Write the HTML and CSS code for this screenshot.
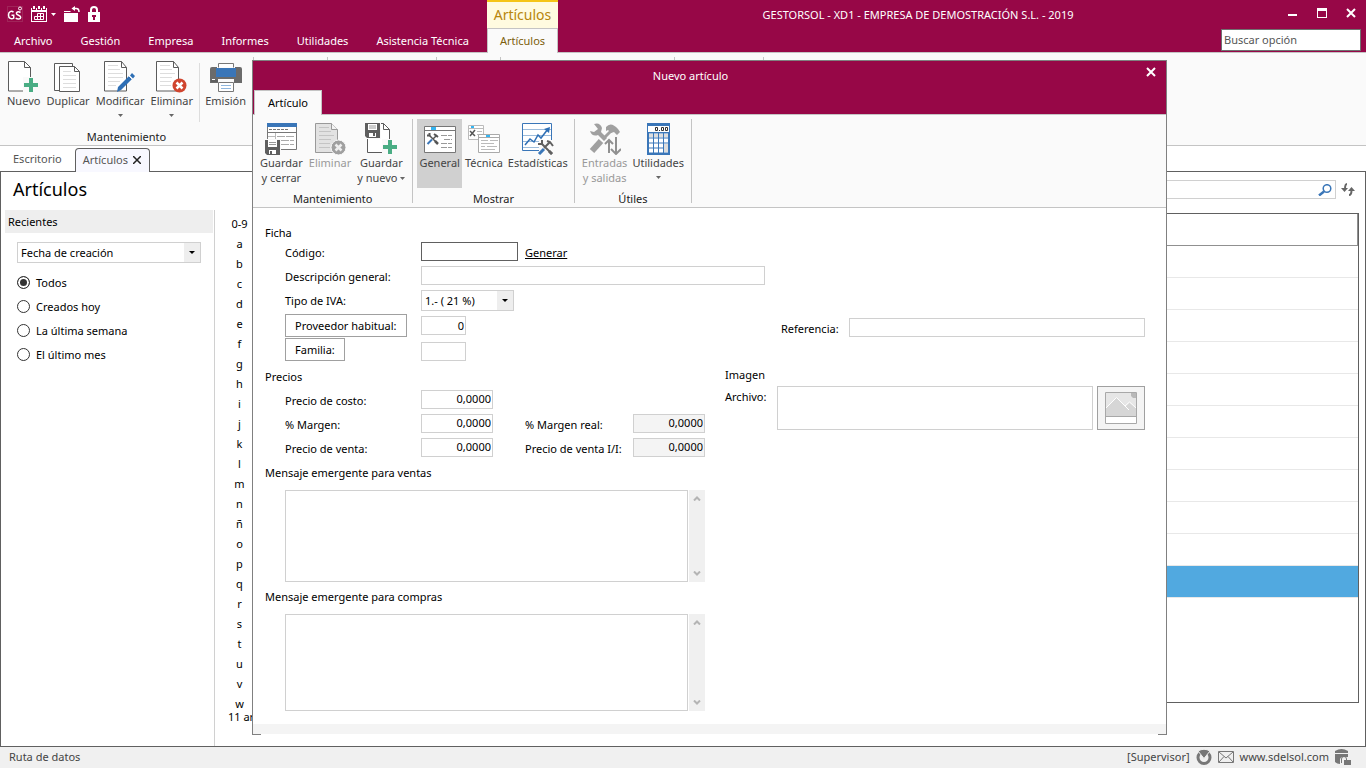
FILE: index.html
```html
<!DOCTYPE html>
<html lang="es">
<head>
  <meta charset="UTF-8">
  <title>GESTORSOL - Nuevo artículo</title>
  <link rel="stylesheet" href="styles.css">
</head>
<body>

  <header class="topbar">
    <div class="topbar-left">
      <div class="quick-access">
        <svg class="app-logo" width="16" height="16" viewBox="0 0 16 16" fill="none" stroke="#fff">
          <rect x="0.5" y="0.5" width="15" height="15" stroke="#a8446c" stroke-dasharray="1 1"/>
          <path d="M6.500 6.200C4.500 4.300 1.500 5.500 1.500 9s3 4.600 5.200 3.200V9.300H4.500" stroke-width="1.500"/>
          <path d="M13.500 6.500C11 5 9 6.200 9.500 7.800s4.200 1.400 4.200 3.400-3 2.200-5 1" stroke-width="1.500"/>
          <circle cx="13" cy="2.500" r="1.500"/>
        </svg>
        <button class="quick-btn" aria-label="Calendario">
          <svg width="16" height="16" viewBox="0 0 16 16">
            <path d="M0 2h1v2h4V2h1v2h4V2h1v2h4V2h1v14H0z" fill="#fff"/>
            <path d="M2 0h2v3H2zM7 0h2v3H7zM12 0h2v3h-2z" fill="#fff"/>
            <path d="M1 6h14v9H1z" fill="#970747"/>
            <path d="M6.500 7.500h6v6h-9v-3h9M6.500 7.500v6M9.500 7.500v6" fill="none" stroke="#fff"/>
          </svg>
          <svg width="5" height="3" viewBox="0 0 5 3"><path d="M0 0h5L2.500 3z" fill="#fff"/></svg>
        </button>
        <button class="quick-btn" aria-label="Abrir">
          <svg width="16" height="16" viewBox="0 0 16 16">
            <path d="M0 5h6l1 1h7v10H0z" fill="#fff"/>
            <path d="M0 6.500h14" stroke="#970747"/>
            <path d="M9 2.500h3.500Q15 2.500 15 6" fill="none" stroke="#fff" stroke-width="1.500"/>
            <path d="M11 0v5L7.500 2.500z" fill="#fff"/>
          </svg>
        </button>
        <button class="quick-btn" aria-label="Bloquear">
          <svg width="12" height="16" viewBox="0 0 12 16">
            <path d="M3 7V4a3 3 0 0 1 6 0v3" fill="none" stroke="#fff" stroke-width="2"/>
            <path d="M0 6h12v10H0z" fill="#fff"/>
            <path d="M4 9h4v2H7v3H5v-3H4z" fill="#970747"/>
          </svg>
        </button>
      </div>
      <nav class="menu">
        <a class="menu-file" href="#">Archivo</a>
        <a href="#">Gestión</a>
        <a href="#">Empresa</a>
        <a href="#">Informes</a>
        <a href="#">Utilidades</a>
        <a href="#">Asistencia Técnica</a>
      </nav>
    </div>
    <div class="context-tab">
      <div class="context-title">Artículos</div>
      <a href="#">Artículos</a>
    </div>
    <div class="topbar-right">
      <div class="window-row">
        <div class="window-title">GESTORSOL - XD1 - EMPRESA DE DEMOSTRACIÓN S.L. - 2019</div>
        <button class="window-btn" aria-label="Minimizar">
          <svg width="10" height="10" viewBox="0 0 10 10"><path d="M0 6h9v2H0z" fill="#fff"/></svg>
        </button>
        <button class="window-btn" aria-label="Maximizar">
          <svg width="10" height="10" viewBox="0 0 10 10"><path d="M0 0h10v10H0zM1 3v6h8V3z" fill="#fff" fill-rule="evenodd"/></svg>
        </button>
        <button class="window-btn" aria-label="Cerrar">
          <svg width="10" height="10" viewBox="0 0 10 10"><path d="M1 1l8 8M9 1L1 9" stroke="#fff" stroke-width="2"/></svg>
        </button>
      </div>
      <input class="search-option" type="text" placeholder="Buscar opción" aria-label="Buscar opción">
    </div>
  </header>

  <div class="ribbon main-ribbon">
    <div class="group group-first">
      <div class="tools">
        <button class="tool">
          <svg width="32" height="32" viewBox="0 0 32 32">
            <path d="M.5.5h16l6 6v23.500H.5z" fill="#fff" stroke="#5b5b5b"/>
            <path d="M16.500.5v6h6" fill="none" stroke="#5b5b5b"/>
            <path d="M15 16h15v16H15z" fill="#fafafa"/>
            <path d="M21 17h4v5h5v4h-5v5h-4v-5h-5v-4h5z" fill="#4aad84"/>
          </svg>
          Nuevo
        </button>
        <button class="tool">
          <svg width="32" height="32" viewBox="0 0 32 32">
            <path d="M2.500 2.500h18v27h-18z" fill="#fff" stroke="#5b5b5b"/>
            <path d="M7.500 5.500h15l5 5v20h-20z" fill="#fff" stroke="#5b5b5b"/>
            <path d="M22.500 5.500v5h5" fill="none" stroke="#5b5b5b"/>
            <path d="M11 10.500h8M11 14.500h13M11 18.500h13M11 22.500h13M11 26.500h13" stroke="#ddd"/>
          </svg>
          Duplicar
        </button>
        <button class="tool">
          <svg width="32" height="32" viewBox="0 0 32 32">
            <path d="M.5.5h17l5 6v23.500H.5z" fill="#fff" stroke="#5b5b5b"/>
            <path d="M17.500.5v6h5" fill="none" stroke="#5b5b5b"/>
            <path d="M4 4.500h10M4 8.500h12M4 12.500h15M4 16.500h15M4 20.500h12M4 24.500h8" stroke="#ddd"/>
            <path d="M28 12l3 3-2 2.500-3-3zM25 15l3 3-11 11-4 2 1-5z" fill="#2e6fb5"/>
            <path d="M25 15l3 3" stroke="#fafafa"/>
          </svg>
          Modificar
          <svg class="caret" width="5" height="3" viewBox="0 0 5 3"><path d="M0 0h5L2.500 3z" fill="#666"/></svg>
        </button>
        <button class="tool">
          <svg width="32" height="32" viewBox="0 0 32 32">
            <path d="M.5.5h17l5 6v23.500H.5z" fill="#fff" stroke="#5b5b5b"/>
            <path d="M17.500.5v6h5" fill="none" stroke="#5b5b5b"/>
            <path d="M4 4.500h10M4 8.500h12M4 12.500h15M4 16.500h12M4 20.500h11M4 24.500h11" stroke="#ddd"/>
            <circle cx="23.500" cy="24.500" r="7" fill="#d0452f"/>
            <path d="M20.500 21.500l6 6M26.500 21.500l-6 6" stroke="#fff" stroke-width="2.500"/>
          </svg>
          Eliminar
          <svg class="caret" width="5" height="3" viewBox="0 0 5 3"><path d="M0 0h5L2.500 3z" fill="#666"/></svg>
        </button>
        <div class="divider"></div>
        <button class="tool">
          <svg width="32" height="32" viewBox="0 0 32 32">
            <path d="M0 8q0-2 2-2h5v7h18V6h5q2 0 2 2v14h-8v-4H8v4H0z" fill="#6b6b6b"/>
            <path d="M8.500 6.500v-4h15v4" fill="#fff" stroke="#777"/>
            <path d="M6 7h20v9H6z" fill="#3a76b8"/>
            <path d="M1 20h7" stroke="#555"/>
            <path d="M2 18.500h3" stroke="#fff"/>
            <path d="M8.500 21.500h15v9h-15z" fill="#fff" stroke="#777"/>
            <path d="M11 24.500h10M11 27.500h10" stroke="#8fb6dd"/>
          </svg>
          Emisión
        </button>
      </div>
      <div class="group-label">Mantenimiento</div>
    </div>
    <div class="group group-s"></div>
    <div class="group group-l"></div>
    <div class="group group-xs"></div>
    <div class="group group-xl"></div>
    <div class="group group-m"></div>
  </div>

  <div class="tabs">
    <a class="tab" href="#">Escritorio</a>
    <a class="tab active" href="#">Artículos
      <svg width="8" height="8" viewBox="0 0 8 8"><path d="M0 0l8 8M8 0L0 8" stroke="#222" stroke-width="1.500"/></svg>
    </a>
  </div>

  <main class="workspace">
    <div class="workspace-head">
      <h1>Artículos</h1>
      <div class="search-box">
        <input type="text" aria-label="Buscar artículo">
        <svg width="14" height="12" viewBox="0 0 14 12" fill="none" stroke="#3a76b8">
          <circle cx="9" cy="4.500" r="3.800" stroke-width="1.500"/>
          <path d="M6 7.500L1 11.500" stroke-width="2.500"/>
        </svg>
      </div>
      <button class="refresh" aria-label="Actualizar">
        <svg width="14" height="13" viewBox="0 0 14 13" fill="none" stroke="#666" stroke-width="2">
          <path d="M6 1Q4 1 4 6M8 12q2.500 0 2.500-5"/>
          <path d="M0 5h7L3.500 9zM7 8h7l-3.500-4z" fill="#666" stroke="none"/>
        </svg>
      </button>
    </div>
    <div class="workspace-body">
      <aside class="recent">
        <h2>Recientes</h2>
        <div class="select recent-select">
          <select aria-label="Ordenar por"><option>Fecha de creación</option></select>
        </div>
        <label class="radio"><input type="radio" name="recent" checked>Todos</label>
        <label class="radio"><input type="radio" name="recent">Creados hoy</label>
        <label class="radio"><input type="radio" name="recent">La última semana</label>
        <label class="radio"><input type="radio" name="recent">El último mes</label>
      </aside>
      <div class="index-column">
        <div class="letters">
          <a href="#">0-9</a><a href="#">a</a><a href="#">b</a><a href="#">c</a><a href="#">d</a><a href="#">e</a><a href="#">f</a><a href="#">g</a><a href="#">h</a><a href="#">i</a><a href="#">j</a><a href="#">k</a><a href="#">l</a><a href="#">m</a><a href="#">n</a><a href="#">ñ</a><a href="#">o</a><a href="#">p</a><a href="#">q</a><a href="#">r</a><a href="#">s</a><a href="#">t</a><a href="#">u</a><a href="#">v</a><a href="#">w</a>
        </div>
        <div class="count">11 artículos</div>
      </div>
      <div class="list">
        <table>
          <thead><tr><th></th></tr></thead>
          <tbody>
            <tr><td></td></tr>
            <tr><td></td></tr>
            <tr><td></td></tr>
            <tr><td></td></tr>
            <tr><td></td></tr>
            <tr><td></td></tr>
            <tr><td></td></tr>
            <tr><td></td></tr>
            <tr><td></td></tr>
            <tr><td></td></tr>
            <tr class="selected"><td></td></tr>
          </tbody>
        </table>
      </div>
    </div>
  </main>

  <footer class="status">
    <span class="status-path">Ruta de datos</span>
    <span>[Supervisor]</span>
    <svg width="16" height="16" viewBox="0 0 16 16">
      <circle cx="8" cy="8.500" r="6" fill="none" stroke="#777" stroke-width="3"/>
      <path d="M2 2q6-3.500 12 0L8 9.500z" fill="#777" stroke="#f0f0f0"/>
    </svg>
    <svg width="16" height="12" viewBox="0 0 16 12" fill="none" stroke="#777">
      <path d="M.5.5h15v11H.5zM1 1l7 6 7-6M1 11l5-5.500M15 11l-5-5.500"/>
    </svg>
    <a href="#">www.sdelsol.com</a>
    <svg width="16" height="16" viewBox="0 0 16 16">
      <path d="M0 2q6.500-4 13 0v2H0z" fill="#777"/>
      <path d="M0 5h13v3H8q-3 0-3 3v4Q2 15 0 13z" fill="#777"/>
      <path d="M6.500 14v-4q0-2.500 2.500-2.500T11.500 10v1" fill="none" stroke="#777"/>
      <path d="M9 11h7v5H9z" fill="#777"/>
    </svg>
  </footer>

  <section class="dialog" role="dialog" aria-labelledby="dialog-title">
    <div class="dialog-head">
      <div class="dialog-bar">
        <div id="dialog-title" class="dialog-title">Nuevo artículo</div>
        <button class="dialog-close" aria-label="Cerrar">
          <svg width="10" height="10" viewBox="0 0 10 10"><path d="M1 1l8 8M9 1L1 9" stroke="#fff" stroke-width="2"/></svg>
        </button>
      </div>
      <a class="dialog-tab" href="#">Artículo</a>
    </div>

    <div class="ribbon dialog-ribbon">
      <div class="group">
        <div class="tools roomy">
          <button class="tool">
            <svg width="32" height="32" viewBox="0 0 32 32">
              <path d="M2.500.5h29v26h-29z" fill="#fff" stroke="#777"/>
              <path d="M2 0h30v4H2z" fill="#3a76b8"/>
              <path d="M4 6.500h20" stroke="#777" stroke-dasharray="3 1"/>
              <path d="M2 9.500h30" stroke="#777"/>
              <path d="M10.500 10v8M3 13.500h8" stroke="#bbb"/>
              <path d="M12 13.500h17M16 17.500h13M16 21.500h13" stroke="#aaa" stroke-dasharray="8 1"/>
              <path d="M0 16h16v16H0z" fill="#fafafa"/>
              <path d="M0 17h15v15H2l-2-2z" fill="#5e5e5e"/>
              <path d="M3 17h9v7H3zM4 27h7v4H4z" fill="#fff"/>
              <path d="M4 19.500h7M4 21.500h7" stroke="#999"/>
              <path d="M5 28h2v3H5z" fill="#5e5e5e"/>
            </svg>
            Guardar<br>y cerrar
          </button>
          <button class="tool" disabled>
            <svg width="32" height="32" viewBox="0 0 32 32">
              <path d="M1.500.5h16l6 6v23h-22z" fill="#e2e2e2" stroke="#999"/>
              <path d="M17.500.5v6h6" fill="#f4f4f4" stroke="#999"/>
              <path d="M5 4.500h10M5 8.500h12M5 12.500h15M5 16.500h12M5 20.500h11M5 24.500h11" stroke="#c4c4c4"/>
              <circle cx="24.500" cy="24.500" r="7.500" fill="#a0a0a0" stroke="#fafafa"/>
              <path d="M21.500 21.500l6 6M27.500 21.500l-6 6" stroke="#eee" stroke-width="2.500"/>
            </svg>
            Eliminar
          </button>
          <button class="tool">
            <svg width="32" height="32" viewBox="0 0 32 32">
              <path d="M2.500 14v15.500h22V6.500l-6-6h-3" fill="#fff" stroke="#5b5b5b"/>
              <path d="M18.500.5v6h6" fill="none" stroke="#5b5b5b"/>
              <path d="M17 16h15v16H17z" fill="#fafafa"/>
              <path d="M0 0h16v16H0z" fill="#fafafa"/>
              <path d="M0 0h15v15H2l-2-2z" fill="#5e5e5e"/>
              <path d="M3 1h9v6H3zM4 10h7v4H4z" fill="#fff"/>
              <path d="M4 3h7M4 5h7" stroke="#999"/>
              <path d="M8 10h2v3H8z" fill="#5e5e5e"/>
              <path d="M23 17h4v5h5v4h-5v5h-4v-5h-5v-4h5z" fill="#4aad84"/>
            </svg>
            Guardar
            <span>y nuevo <svg width="5" height="5" viewBox="0 0 5 5"><path d="M0 0h5L2.500 3z" fill="#666"/></svg></span>
          </button>
        </div>
        <div class="group-label">Mantenimiento</div>
      </div>
      <div class="group">
        <div class="tools">
          <button class="tool pressed">
            <svg width="32" height="32" viewBox="0 0 32 32">
              <path d="M.5 3.500h31v26H.5z" fill="#fff" stroke="#777"/>
              <path d="M0 7.500h32" stroke="#777"/>
              <path d="M7 4h5v3H7z" fill="#35b4f0"/>
              <path d="M5 12l8 8M13 12l-4 4" stroke="#555" stroke-width="1.500"/>
              <path d="M8 16.500l-4.500 4.500" stroke="#3a76b8" stroke-width="2"/>
              <path d="M3 12.500h2.500V10M10 11l4 3" fill="none" stroke="#555" stroke-width="2"/>
              <path d="M11 18l3 3" stroke="#555" stroke-width="2.500"/>
              <path d="M17 12.500h11M20 16.500h8M17 20.500h11M17 24.500h11" stroke="#999" stroke-dasharray="6 1"/>
            </svg>
            General
          </button>
          <button class="tool">
            <svg width="32" height="32" viewBox="0 0 32 32">
              <path d="M.5 2.500h15v14H.5z" fill="#fff" stroke="#bbb"/>
              <path d="M0 5.500h16" stroke="#bbb"/>
              <path d="M3 3h3v2H3z" fill="#35b4f0"/>
              <path d="M2 8l5 5M7 7l-5 6" stroke="#555" stroke-width="1.500"/>
              <path d="M9 8.500h5M9 11.500h5" stroke="#bbb"/>
              <path d="M10.500 11.500h21v18h-21z" fill="#fff" stroke="#aaa"/>
              <path d="M10 14.500h22" stroke="#aaa"/>
              <path d="M18 12h4v2h-4z" fill="#35b4f0"/>
              <path d="M13 17.500h7M22 17.500h8M13 20.500h13M13 23.500h4M19 23.500h10M13 26.500h14" stroke="#bbb"/>
            </svg>
            Técnica
          </button>
          <button class="tool">
            <svg width="32" height="32" viewBox="0 0 32 32">
              <path d="M.5.5h29v27H.5z" fill="#fff" stroke="#3a76b8"/>
              <path d="M1 6.500h28M1 12.500h28M1 18.500h28M1 24.500h28" stroke="#9dbcdb"/>
              <path d="M3 22l5-6 4 3 4-7 3 3 7-9" fill="none" stroke="#2e6fb5" stroke-width="1.500"/>
              <path d="M22 6l6-2-1 6z" fill="#2e6fb5"/>
              <path d="M17 17h15v15H17z" fill="#fafafa"/>
              <path d="M19 20l11 11M28 19l-6 6" stroke="#606060" stroke-width="2"/>
              <path d="M22 26l-5 5" stroke="#3a76b8" stroke-width="3"/>
              <path d="M16 21h4v-4M25 18l3 1 3 4" fill="none" stroke="#606060" stroke-width="2"/>
              <path d="M27 28l3 3" stroke="#606060" stroke-width="3"/>
            </svg>
            Estadísticas
          </button>
        </div>
        <div class="group-label">Mostrar</div>
      </div>
      <div class="group group-last">
        <div class="tools">
          <button class="tool" disabled>
            <svg width="32" height="32" viewBox="0 0 32 32">
              <path d="M5 1q6-2 8 4l-1 4 6 6-3 3-6-6q-6 2-8-4l4 1 4-3z" fill="#a0a0a0"/>
              <path d="M17 4q5-6 12 2l2 3-3 3-3-3-3 1-3-3-2 1z" fill="#a0a0a0"/>
              <path d="M22 8l-8 8" stroke="#a0a0a0" stroke-width="3"/>
              <path d="M12 18L3 28" stroke="#a0a0a0" stroke-width="6"/>
              <path d="M20 31V17M16 21l4-4 4 4M27 14v16M22 26l5 5 5-5" fill="none" stroke="#fafafa" stroke-width="4"/>
              <path d="M20 30V17M16 21l4-4 4 4" fill="none" stroke="#909090" stroke-width="2"/>
              <path d="M27 14v16M22 26l5 5 5-5" fill="none" stroke="#909090" stroke-width="2"/>
            </svg>
            Entradas<br>y salidas
          </button>
          <button class="tool">
            <svg width="32" height="32" viewBox="0 0 32 32">
              <path d="M5 0h23v32H5z" fill="#3a76b8"/>
              <path d="M6 3h21v6H6z" fill="#fff"/>
              <g fill="none" stroke="#333">
                <path d="M13.500 4.500h2v3h-2zM19.500 4.500h2v3h-2zM23.500 4.500h2v3h-2zM17 7.500h1"/>
              </g>
              <path d="M7 12.500h19M7 17.500h19M7 22.500h19M7 27.500h19" stroke="#fff" stroke-width="4" stroke-dasharray="4 1"/>
              <path d="M7 11h19v3H7z" fill="#ddd"/>
              <path d="M22 21h4v8h-4z" fill="#ddd"/>
              <path d="M11.500 10v20M16.500 10v20M21.500 10v20" stroke="#3a76b8"/>
            </svg>
            Utilidades
            <svg class="caret" width="5" height="3" viewBox="0 0 5 3"><path d="M0 0h5L2.500 3z" fill="#666"/></svg>
          </button>
        </div>
        <div class="group-label">Útiles</div>
      </div>
    </div>

    <form class="form" onsubmit="event.preventDefault()">
      <div class="form-row">
        <section class="card">
          <h3>Ficha</h3>
          <div class="field">
            <label for="codigo">Código:</label>
            <input type="text" id="codigo" class="code">
            <a class="generate" href="#">Generar</a>
          </div>
          <div class="field">
            <label for="descripcion">Descripción general:</label>
            <input type="text" id="descripcion" class="wide">
          </div>
          <div class="field">
            <label for="iva">Tipo de IVA:</label>
            <div class="select vat"><select id="iva"><option>1.- ( 21 %)</option></select></div>
          </div>
          <div class="field centered">
            <div class="field-button"><button type="button">Proveedor habitual:</button></div>
            <input type="text" class="short" value="0" aria-label="Proveedor habitual">
          </div>
          <div class="field low">
            <div class="field-button"><button type="button">Familia:</button></div>
            <input type="text" class="short" aria-label="Familia">
          </div>
        </section>
        <div class="reference">
          <label for="referencia">Referencia:</label>
          <input type="text" id="referencia">
        </div>
      </div>

      <div class="form-row second">
        <section class="prices">
          <h3>Precios</h3>
          <div class="field">
            <label for="costo">Precio de costo:</label>
            <input type="text" id="costo" class="amount" value="0,0000">
          </div>
          <div class="field">
            <label for="margen">% Margen:</label>
            <input type="text" id="margen" class="amount" value="0,0000">
            <label class="label-real" for="margen-real">% Margen real:</label>
            <input type="text" id="margen-real" class="amount" value="0,0000" readonly>
          </div>
          <div class="field">
            <label for="venta">Precio de venta:</label>
            <input type="text" id="venta" class="amount" value="0,0000">
            <label class="label-real" for="venta-ii">Precio de venta I/I:</label>
            <input type="text" id="venta-ii" class="amount" value="0,0000" readonly>
          </div>
        </section>
        <section class="image">
          <h3>Imagen</h3>
          <div class="image-row">
            <label for="archivo">Archivo:</label>
            <textarea id="archivo"></textarea>
            <button type="button" class="image-btn" aria-label="Elegir imagen">
              <svg width="32" height="32" viewBox="0 0 32 32">
                <path d="M.5.5h31v31H.5z" fill="#fff" stroke="#a8a8a8"/>
                <path d="M1 1h30v23H1z" fill="#e6e6e6"/>
                <path d="M1 16L11.500 5.500l9 9 4-4L31 16v8H1z" fill="#d6d6d6"/>
                <path d="M1 16L11.500 5.500 24 18M20 14l4.500-4L31 16" fill="none" stroke="#fff"/>
                <path d="M26 1h5v5h-3l-2-2z" fill="#b8b8b8"/>
                <path d="M0 24.500h32" stroke="#a8a8a8"/>
              </svg>
            </button>
          </div>
        </section>
      </div>

      <label class="message-label" for="mensaje-ventas">Mensaje emergente para ventas</label>
      <div class="message">
        <textarea id="mensaje-ventas"></textarea>
        <div class="scroll">
          <svg width="8" height="5" viewBox="0 0 8 5"><path d="M1 4.500l3-3 3 3" fill="none" stroke="#b4b4b4" stroke-width="2"/></svg>
          <svg width="8" height="5" viewBox="0 0 8 5"><path d="M1 .5l3 3 3-3" fill="none" stroke="#b4b4b4" stroke-width="2"/></svg>
        </div>
      </div>
      <label class="message-label" for="mensaje-compras">Mensaje emergente para compras</label>
      <div class="message last">
        <textarea id="mensaje-compras"></textarea>
        <div class="scroll">
          <svg width="8" height="5" viewBox="0 0 8 5"><path d="M1 4.500l3-3 3 3" fill="none" stroke="#b4b4b4" stroke-width="2"/></svg>
          <svg width="8" height="5" viewBox="0 0 8 5"><path d="M1 .5l3 3 3-3" fill="none" stroke="#b4b4b4" stroke-width="2"/></svg>
        </div>
      </div>
    </form>
    <div class="dialog-foot"></div>
  </section>

</body>
</html>
```
FILE: styles.css
```css
* {
  box-sizing: border-box;
}

body {
  margin: 0;
  height: 100vh;
  display: flex;
  flex-direction: column;
  position: relative;
  overflow: hidden;
  background: #fff;
  color: #000;
  font-family: "Noto Sans", "Open Sans", sans-serif;
  font-size: 11px;
  line-height: 15px;
}

a {
  color: inherit;
  text-decoration: none;
}

h1, h2, h3 {
  margin: 0;
  font-weight: normal;
}

button, input, select, textarea {
  font: inherit;
  color: inherit;
  margin: 0;
  padding: 0;
  border-radius: 0;
}

button {
  background: none;
  border: none;
  cursor: pointer;
}

svg {
  flex: none;
}

/* top bar */
.topbar {
  display: flex;
  height: 53px;
  background: #970747;
  color: #fff;
  border-bottom: 1px solid #c4c4c4;
}

.topbar-left {
  display: flex;
  flex-direction: column;
  min-width: 487px;
}

.quick-access {
  display: flex;
  align-items: center;
  gap: 8px;
  height: 29px;
  padding-left: 7px;
}

.quick-btn {
  display: flex;
  align-items: center;
  gap: 4px;
}

.menu {
  display: flex;
}

.menu a {
  padding: 1px 14px 0;
  line-height: 23px;
}

.menu-file {
  background: #970747;
}

.context-tab {
  width: 71px;
  height: 53px;
  text-align: center;
  background: #fafafa;
  color: #7d5f0c;
}

.context-title {
  height: 29px;
  border-top: 2px solid #f5c518;
  border-bottom: 1px solid #c4c4c4;
  background: #fffbe0;
  color: #b8860b;
  font-size: 14px;
  line-height: 26px;
}

.context-tab a {
  display: block;
  line-height: 24px;
  border-left: 1px solid #c4c4c4;
  border-right: 1px solid #c4c4c4;
}

.topbar-right {
  flex: 1;
  display: flex;
  flex-direction: column;
}

.window-row {
  display: flex;
  height: 29px;
  padding-right: 1px;
}

.window-title {
  flex: 1;
  text-align: center;
  line-height: 30px;
}

.window-btn {
  width: 29px;
  height: 26px;
}

.search-option {
  align-self: flex-end;
  width: 140px;
  height: 22px;
  margin-right: 5px;
  padding: 0 2px 2px;
  border: 1px solid #707070;
  background: #fff;
}

.search-option::placeholder {
  color: #555;
  opacity: 1;
}

/* ribbons */
.ribbon {
  display: flex;
  background: #fafafa;
  border-bottom: 1px solid #c4c4c4;
}

.main-ribbon {
  height: 93px;
  padding-top: 4px;
}

.group {
  display: flex;
  flex-direction: column;
  padding: 0 4px;
  border-right: 1px solid #c4c4c4;
}

.group-first {
  width: 254px;
}

.group-xs {
  width: 64px;
}

.group-s {
  width: 74px;
}

.group-m {
  width: 89px;
}

.group-l {
  width: 109px;
}

.group-xl {
  width: 174px;
}

.group-last {
  padding: 0 5px;
}

.tools {
  display: flex;
  flex: 1;
}

.tool {
  display: flex;
  flex-direction: column;
  align-items: center;
  padding: 4px 3px 0;
  color: #444;
  text-align: center;
  white-space: nowrap;
}

.tool:disabled {
  color: #999;
}

.tool.pressed {
  background: #d0d0d0;
}

.caret {
  margin-top: 6px;
}

.divider {
  width: 1px;
  height: 59px;
  margin: 6px 3px 0;
  background: #ddd;
}

.group-label {
  text-align: center;
  line-height: 16px;
  color: #222;
}

/* document tabs */
.tabs {
  display: flex;
  align-items: flex-end;
  height: 26px;
  margin-bottom: -1px;
  z-index: 1;
}

.tab {
  height: 24px;
  line-height: 22px;
  padding: 0 13px;
  color: #555;
}

.tab.active {
  display: flex;
  align-items: center;
  gap: 5px;
  padding: 0 8px 1px 7px;
  border: 1px solid #606060;
  border-bottom: none;
  border-radius: 4px 4px 0 0;
  background: #f8f8ff;
}

/* workspace */
.workspace {
  flex: 1;
  display: flex;
  flex-direction: column;
  min-height: 0;
  border: 1px solid #606060;
  background: #fff;
}

.workspace-head {
  display: flex;
  align-items: center;
  height: 38px;
  padding: 0 10px 3px 12px;
}

h1 {
  padding-bottom: 2px;
  font-size: 18px;
  line-height: 24px;
}

.search-box {
  display: flex;
  align-items: center;
  flex: 1;
  height: 19px;
  margin-left: 180px;
  padding-right: 3px;
  border: 1px solid #d0d0d0;
}

.search-box input {
  flex: 1;
  border: none;
}

.refresh {
  margin-left: 5px;
  line-height: 0;
}

.workspace-body {
  flex: 1;
  display: flex;
  min-height: 0;
}

.recent {
  width: 214px;
  padding: 0 1px 0 4px;
  border-right: 1px solid #d0d0d0;
}

.recent h2 {
  padding-left: 3px;
  background: #eee;
  font-size: 11px;
  line-height: 23px;
}

.recent-select {
  width: 184px;
  margin: 9px 12px 7px;
}

.select {
  position: relative;
  height: 21px;
}

.select select {
  width: 100%;
  height: 21px;
  padding-left: 3px;
  border: 1px solid #d0d0d0;
  background: #fff;
  appearance: none;
}

.select::after {
  content: "";
  position: absolute;
  top: 1px;
  right: 1px;
  width: 16px;
  height: 19px;
  background: #eee;
  pointer-events: none;
}

.select::before {
  content: "";
  position: absolute;
  z-index: 1;
  top: 9px;
  right: 6px;
  border: 3px solid transparent;
  border-top-color: #000;
  border-bottom: none;
  pointer-events: none;
}

.radio {
  display: flex;
  align-items: center;
  gap: 6px;
  height: 24px;
  padding-left: 12px;
}

.radio input {
  width: 13px;
  height: 13px;
  border: 1px solid #333;
  border-radius: 50%;
  background: #fff;
  appearance: none;
}

.radio input:checked {
  background: #333;
  box-shadow: inset 0 0 0 2px #fff;
}

.index-column {
  display: flex;
  flex-direction: column;
  width: 49px;
  padding: 4px 0 22px;
  white-space: nowrap;
}

.letters {
  flex: 1;
  display: flex;
  flex-direction: column;
  min-height: 0;
}

.letters a {
  flex: none;
  line-height: 20px;
  text-align: center;
}

.count {
  padding-left: 13px;
}

.list {
  flex: 1;
  margin: 3px 6px 43px 0;
  border: 1px solid #606060;
}

.list table {
  width: 100%;
  border-collapse: collapse;
}

.list th {
  height: 31px;
  padding: 0;
  border-right: 1px solid #909090;
  border-bottom: 1px solid #909090;
}

.list td {
  height: 32px;
  padding: 0;
  border-bottom: 1px solid #e8e8e8;
}

.list .selected td {
  background: #51a9e0;
}

/* status bar */
.status {
  display: flex;
  align-items: center;
  gap: 6px;
  height: 21px;
  padding: 0 15px 2px 9px;
  background: #f0f0f0;
  color: #444;
}

.status-path {
  flex: 1;
}

/* dialog */
.dialog {
  position: absolute;
  z-index: 2;
  top: 60px;
  right: 199px;
  bottom: 33px;
  left: 252px;
  display: flex;
  flex-direction: column;
  border: 1px solid #808080;
  border-bottom: none;
  background: #fff;
}

.dialog-head {
  height: 54px;
  background: #970747;
  border-bottom: 1px solid #c4c4c4;
}

.dialog-bar {
  display: flex;
  height: 29px;
  color: #fff;
}

.dialog-title {
  flex: 1;
  text-align: center;
  line-height: 29px;
}

.dialog-close {
  width: 30px;
  height: 22px;
  margin-left: 8px;
}

.dialog-tab {
  display: inline-block;
  height: 25px;
  margin-left: 1px;
  padding: 0 13px;
  border: 1px solid #c4c4c4;
  border-bottom: none;
  background: #fafafa;
  line-height: 24px;
}

.dialog-ribbon {
  height: 93px;
  padding: 4px 0;
}

.dialog-ribbon .tools {
  flex: none;
  gap: 1px;
  height: 69px;
}

.dialog-ribbon .tool {
  padding: 4px 2px 0;
}

.dialog-ribbon .roomy {
  gap: 0;
}

.dialog-ribbon .roomy .tool {
  padding: 4px 3px 0;
}

.dialog-ribbon .group-label {
  margin-top: 3px;
  line-height: 15px;
}

.form {
  flex: 1;
  display: flex;
  flex-direction: column;
  min-height: 0;
  padding: 17px 21px 13px 12px;
}

.form-row {
  display: flex;
  gap: 16px;
}

.form-row.second {
  gap: 20px;
  margin-top: 6px;
}

h3 {
  font-size: 11px;
  line-height: 16px;
}

.card {
  width: 500px;
}

.field {
  display: flex;
  height: 24px;
  padding: 1px 0 0 20px;
}

.field label {
  width: 136px;
  line-height: 22px;
}

.field.centered {
  align-items: center;
  padding-top: 0;
}

.field.low {
  align-items: flex-end;
  padding-top: 0;
}

.form input,
.form textarea {
  height: 19px;
  border: 1px solid #d0d0d0;
  background: #fff;
  resize: none;
}

.form .code {
  width: 97px;
  border-color: #606060;
}

.form .wide {
  width: 344px;
}

.form .short {
  width: 45px;
  padding-right: 1px;
  text-align: right;
}

.form .amount {
  width: 72px;
  padding: 0 1px 2px 0;
  text-align: right;
}

.form .amount:read-only {
  background: #f4f4f4;
}

.vat {
  width: 93px;
}

.generate {
  margin-left: 7px;
  line-height: 22px;
  text-decoration: underline;
}

.field-button {
  width: 136px;
}

.field-button button {
  height: 23px;
  padding: 0 9px;
  border: 1px solid #a0a0a0;
  background: #fff;
}

.reference {
  flex: 1;
  display: flex;
  align-items: flex-end;
  padding-bottom: 24px;
}

.reference label {
  width: 68px;
  line-height: 16px;
}

.reference input {
  flex: 1;
}

.prices {
  width: 440px;
  padding-top: 2px;
}

.prices h3 {
  margin-bottom: 4px;
}

.field .label-real {
  width: 108px;
  margin-left: 32px;
}

.image {
  flex: 1;
}

.image-row {
  display: flex;
  margin-top: 3px;
}

.image-row label {
  width: 52px;
  line-height: 22px;
}

.image-row textarea {
  flex: 1;
  height: 44px;
}

.image-btn {
  width: 48px;
  height: 44px;
  margin-left: 4px;
  border: 1px solid #a0a0a0;
  background: #f4f4f4;
  line-height: 0;
}

.message-label {
  margin-top: 4px;
  line-height: 16px;
}

.message {
  display: flex;
  gap: 1px;
  width: 420px;
  height: 92px;
  margin: 9px 0 3px 20px;
}

.message.last {
  flex: 1;
  margin-bottom: 0;
}

.message textarea {
  flex: 1;
  height: auto;
}

.scroll {
  display: flex;
  flex-direction: column;
  justify-content: space-between;
  align-items: center;
  width: 16px;
  padding: 6px 0;
  background: #f0f0f0;
}

.dialog-foot {
  position: relative;
  height: 11px;
  background: #f4f4f4;
  border-bottom: 1px solid #fff;
}

/* the frame closes only at the corners */
.dialog-foot::before,
.dialog-foot::after {
  content: "";
  position: absolute;
  bottom: -1px;
  width: 8px;
  height: 1px;
  background: #808080;
}

.dialog-foot::before {
  left: 0;
}

.dialog-foot::after {
  right: 0;
}
```
